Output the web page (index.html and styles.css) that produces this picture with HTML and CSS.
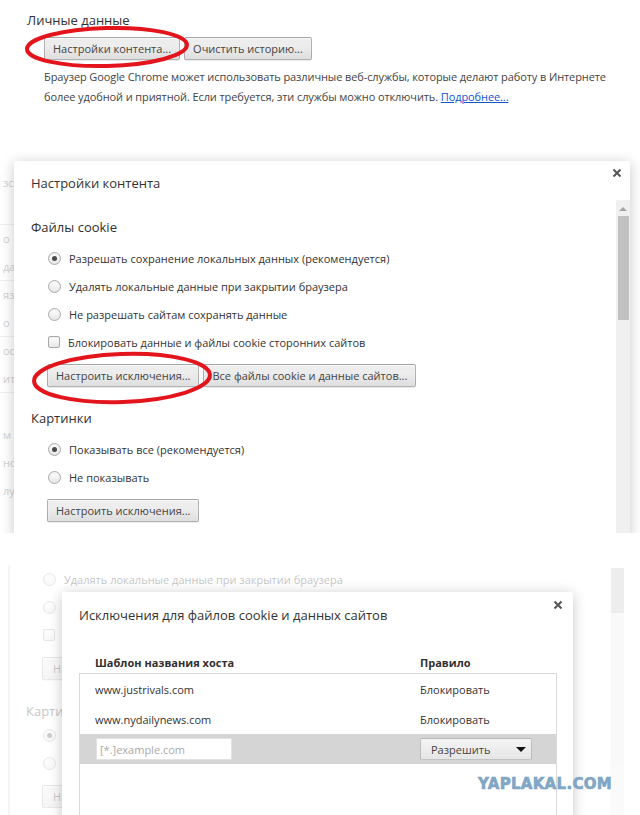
FILE: index.html
```html
<!DOCTYPE html>
<html lang="ru">
<head>
  <meta charset="UTF-8">
  <title>Настройки – Личные данные</title>
  <link rel="stylesheet" href="styles.css">
</head>
<body>

<!-- settings page: privacy block -->
<section class="shot privacy">
  <h3 class="group-title">Личные данные</h3>
  <div class="btn-row">
    <span class="ringed">
      <button class="btn">Настройки контента...</button>
      <svg class="ring ring-a" width="166" height="44" viewBox="0 0 166 44">
        <ellipse cx="83" cy="22" rx="80" ry="19" transform="rotate(-1.5 83 22)"/>
      </svg>
    </span>
    <button class="btn">Очистить историю...</button>
  </div>
  <p class="note">Браузер Google Chrome может использовать различные веб-службы, которые делают работу в Интернете<br>более удобной и приятной. Если требуется, эти службы можно отключить. <a href="#">Подробнее...</a></p>
</section>

<!-- content settings dialog -->
<section class="shot content-settings">
  <div class="strip">
    <div class="strip-row">зс</div>
    <div class="strip-row line"></div>
    <div class="strip-row">о</div>
    <div class="strip-row line">дa</div>
    <div class="strip-row">яз</div>
    <div class="strip-row line">о</div>
    <div class="strip-row">ос</div>
    <div class="strip-row line">ит</div>
    <div class="strip-row"></div>
    <div class="strip-row">м</div>
    <div class="strip-row">нс</div>
    <div class="strip-row">лу</div>
  </div>
  <div class="dialog">
    <div class="dialog-head">
      <h2 class="dialog-title">Настройки контента</h2>
      <svg class="close-x" width="10" height="10" viewBox="0 0 10 10"><path d="M1.5 1.5L8.5 8.5M8.5 1.5L1.5 8.5"/></svg>
    </div>
    <div class="dialog-body">
      <div class="pane">
        <h3 class="group-title">Файлы cookie</h3>
        <div class="options">
          <label class="option"><span class="radio checked"></span>Разрешать сохранение локальных данных (рекомендуется)</label>
          <label class="option"><span class="radio"></span>Удалять локальные данные при закрытии браузера</label>
          <label class="option"><span class="radio"></span>Не разрешать сайтам сохранять данные</label>
          <label class="option"><span class="checkbox"></span>Блокировать данные и файлы cookie сторонних сайтов</label>
        </div>
        <div class="btn-row">
          <span class="ringed">
            <button class="btn">Настроить исключения...</button>
            <svg class="ring ring-b" width="182" height="55" viewBox="0 0 182 55">
              <ellipse cx="91" cy="27" rx="88" ry="24" transform="rotate(-2 91 27)"/>
            </svg>
          </span>
          <button class="btn">Все файлы cookie и данные сайтов...</button>
        </div>
        <h3 class="group-title spaced">Картинки</h3>
        <div class="options">
          <label class="option"><span class="radio checked"></span>Показывать все (рекомендуется)</label>
          <label class="option"><span class="radio"></span>Не показывать</label>
        </div>
        <div class="btn-row">
          <button class="btn">Настроить исключения...</button>
        </div>
      </div>
      <div class="scrollbar">
        <span class="scroll-up"></span>
        <span class="scroll-thumb"></span>
      </div>
    </div>
  </div>
</section>

<!-- cookie exceptions dialog over the dimmed settings -->
<section class="shot exceptions">
  <div class="backdrop">
    <div class="backdrop-edge"></div>
    <div class="backdrop-page">
      <div class="options">
        <label class="option"><span class="radio"></span>Удалять локальные данные при закрытии браузера</label>
      </div>
      <!-- the rest of the page sits under the dialog, only its left edge shows -->
      <div class="under">
        <div class="options">
          <label class="option"><span class="radio"></span></label>
          <label class="option"><span class="checkbox"></span></label>
        </div>
        <div class="btn-row">
          <span class="btn stub">Н</span>
        </div>
        <h3 class="group-title spaced">Карти</h3>
        <div class="options">
          <label class="option"><span class="radio checked"></span></label>
          <label class="option"><span class="radio"></span></label>
        </div>
        <div class="btn-row">
          <span class="btn stub">Н</span>
        </div>
      </div>
    </div>
    <div class="backdrop-scroll"><span class="scroll-thumb"></span></div>
  </div>

  <div class="dialog overlay">
    <div class="dialog-head">
      <h2 class="dialog-title">Исключения для файлов cookie и данных сайтов</h2>
      <svg class="close-x" width="10" height="10" viewBox="0 0 10 10"><path d="M1.5 1.5L8.5 8.5M8.5 1.5L1.5 8.5"/></svg>
    </div>
    <div class="exc-body">
      <div class="exc-row exc-header">
        <span>Шаблон названия хоста</span>
        <span>Правило</span>
      </div>
      <div class="exc-list">
        <div class="exc-row">
          <span>www.justrivals.com</span>
          <span>Блокировать</span>
        </div>
        <div class="exc-row">
          <span>www.nydailynews.com</span>
          <span>Блокировать</span>
        </div>
        <div class="exc-row selected">
          <span><input class="host-input" placeholder="[*.]example.com"></span>
          <span><span class="select">Разрешить<i class="caret"></i></span></span>
        </div>
      </div>
    </div>
  </div>

  <span class="watermark">YAPLAKAL.COM</span>
</section>

</body>
</html>
```

FILE: styles.css
```css
body {
  margin: 0;
  background: #fff;
  font-family: "Open Sans", "Noto Sans", sans-serif;
  font-size: 11px;
  color: #333;
}
.shot {
  position: relative;
  box-sizing: border-box;
  overflow: hidden;
}

/* shared controls */
.group-title {
  margin: 0;
  font-size: 13px;
  font-weight: normal;
  line-height: 20px;
  color: #303030;
}
.btn-row {
  display: flex;
  gap: 4px;
}
.btn {
  box-sizing: border-box;
  height: 23px;
  padding: 0 8px;
  font: inherit;
  color: #444;
  white-space: nowrap;
  background: linear-gradient(#ededed, #ededed 38%, #dedede);
  border: 1px solid rgba(0, 0, 0, .25);
  border-radius: 2px;
  box-shadow: 0 1px 0 rgba(0, 0, 0, .08), inset 0 1px 2px rgba(255, 255, 255, .75);
}
.btn.stub {
  display: flex;
  align-items: center;
  flex: none;
  width: 150px;
  padding-left: 10px;
}
.options {
  display: flex;
  flex-direction: column;
}
.option {
  display: flex;
  align-items: center;
  height: 28px;
  padding-left: 17px;
  white-space: nowrap;
}
.radio, .checkbox {
  box-sizing: border-box;
  flex: none;
  width: 13px;
  height: 13px;
  margin-right: 8px;
  border: 1px solid #aaa;
  background: linear-gradient(#fff, #e6e6e6);
  box-shadow: inset 0 1px 2px rgba(0, 0, 0, .06);
}
.radio {
  border-radius: 50%;
  display: flex;
  align-items: center;
  justify-content: center;
}
.radio.checked::after {
  content: "";
  width: 5px;
  height: 5px;
  border-radius: 50%;
  background: #4a4a4a;
}
.checkbox {
  width: 12px;
  height: 12px;
  border-radius: 2px;
}

/* hand-drawn red rings */
.ringed {
  position: relative;
  display: inline-flex;
}
.ring {
  position: absolute;
  pointer-events: none;
  overflow: visible;
}
.ring ellipse {
  fill: none;
  stroke: #e3141c;
  stroke-width: 4;
}
.ring-a { left: -20px; top: -12px; }
.ring-b { left: -16px; top: -13px; }

/* privacy block */
.privacy {
  height: 152px;
  padding: 10px 0 0 27px;
}
.privacy .btn-row {
  margin: 7px 0 0 17px;
}
.note {
  margin: 7px 0 0 17px;
  line-height: 20px;
  color: #444;
  letter-spacing: -.1px;
}
.note a {
  color: #15c;
}

/* dialogs */
.dialog {
  background: #fff;
  box-shadow: 0 2px 14px rgba(0, 0, 0, .22);
  border-radius: 2px;
}
.dialog-head {
  box-sizing: border-box;
  height: 39px;
  display: flex;
  justify-content: space-between;
  align-items: flex-start;
  padding: 7px 8px 0 17px;
}
.dialog-title {
  margin: 5px 0 0;
  font-size: 13px;
  font-weight: normal;
  line-height: 20px;
  color: #333;
}
.close-x path {
  stroke: #555;
  stroke-width: 2;
}

/* content settings */
.content-settings {
  height: 381px;
  display: flex;
  padding-top: 9px;
}
.strip {
  width: 14px;
  flex: none;
  padding-top: 8px;
  color: #d2d2d2;
  overflow: hidden;
}
.strip-row {
  height: 28px;
  line-height: 28px;
  padding-left: 3px;
  white-space: nowrap;
}
.strip-row.line {
  box-sizing: border-box;
  border-bottom: 1px solid #f0f0f0;
}
.content-settings .dialog {
  width: 616px;
  height: 380px;
  flex: none;
}
.dialog-body {
  display: flex;
  height: 341px;
}
.pane {
  flex: 1;
  padding: 17px 0 0 17px;
}
.pane .options {
  margin-top: 7px;
}
.pane .btn-row {
  margin: 8px 0 0 16px;
}
.group-title.spaced {
  margin-top: 21px;
}
.scrollbar {
  width: 14px;
  background: #f0f0f0;
  display: flex;
  flex-direction: column;
  align-items: center;
}
.scroll-up {
  margin: 7px 0 5px;
  width: 0;
  height: 0;
  border-left: 4px solid transparent;
  border-right: 4px solid transparent;
  border-bottom: 4px solid #a3a3a3;
}
.scroll-thumb {
  width: 11px;
  height: 104px;
  background: #c1c1c1;
}

/* exceptions dialog */
.exceptions {
  height: 250px;
  margin-top: 32px;
}
.backdrop {
  display: flex;
  height: 100%;
  opacity: .28;
}
.backdrop-edge {
  width: 8px;
  border-right: 2px solid #ddd;
}
.backdrop-page {
  flex: 1;
  padding-left: 16px;
}
.backdrop-page .btn-row {
  margin: 8px 0 0 16px;
}
.under {
  width: 38px;
  overflow: hidden;
}
.backdrop-scroll {
  width: 13px;
  margin: 3px 16px 0 0;
  background: #ececec;
}
.backdrop-scroll .scroll-thumb {
  display: block;
  width: 13px;
  height: 45px;
}
.overlay {
  position: absolute;
  left: 62px;
  top: 27px;
  width: 511px;
  height: 260px;
}
.overlay .dialog-head {
  padding: 8px 10px 0 17px;
  height: 33px;
}
.exc-body {
  padding: 27px 16px 0 17px;
}
.exc-row {
  display: grid;
  grid-template-columns: 340px 1fr;
  align-items: center;
  height: 30px;
  color: #333;
}
.exc-row > span:first-child {
  padding-left: 15px;
}
.exc-header {
  height: 20px;
  margin: 0 1px 1px;
  font-weight: bold;
  color: #303030;
}
.exc-list {
  border: 1px solid #d9d9d9;
  height: 160px;
}
.exc-row.selected {
  background: #d5d5d5;
}
.host-input {
  box-sizing: border-box;
  width: 136px;
  height: 22px;
  margin-left: 1px;
  padding: 0 3px;
  border: 1px solid #e2e2e2;
  font: inherit;
  color: #333;
  background: #fff;
}
.host-input::placeholder {
  color: #a9a9a9;
}
.select {
  box-sizing: border-box;
  display: flex;
  align-items: center;
  justify-content: space-between;
  width: 112px;
  height: 22px;
  padding: 0 5px 0 10px;
  background: linear-gradient(#f4f4f4, #e6e6e6);
  border: 1px solid rgba(0, 0, 0, .2);
  border-radius: 2px;
  color: #444;
}
.caret {
  width: 0;
  height: 0;
  border-left: 5px solid transparent;
  border-right: 5px solid transparent;
  border-top: 5px solid #111;
}
.watermark {
  position: absolute;
  left: 478px;
  top: 212px;
  font-family: "DejaVu Sans", sans-serif;
  font-weight: bold;
  font-size: 15px;
  line-height: 14px;
  letter-spacing: .3px;
  color: #82a8c6;
  -webkit-text-stroke: .6px #7ba2c1;
}
```
